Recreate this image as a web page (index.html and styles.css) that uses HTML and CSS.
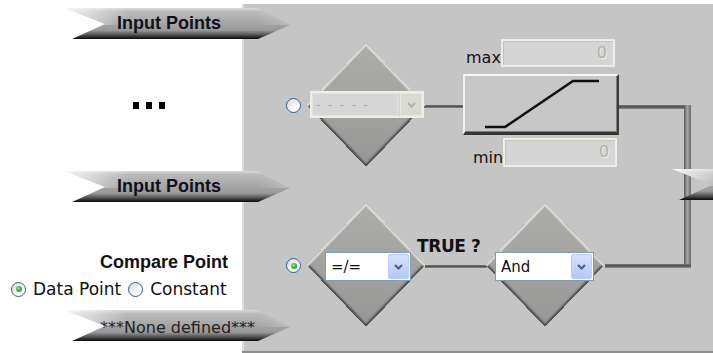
FILE: index.html
```html
<!DOCTYPE html>
<html lang="en">
<head>
  <meta charset="UTF-8" />
  <title>Compare Point – Logic Editor</title>
  <link rel="stylesheet" href="styles.css">
</head>
<body>
  <div class="page">

    <aside class="side">
      <div class="banner banner-title">Input Points</div>
      <div class="ellipsis"><i></i><i></i><i></i></div>
      <div class="banner banner-title banner-second">Input Points</div>

      <div class="compare">
        <div class="compare-title">Compare Point</div>
        <div class="choice">
          <label><span class="radio on"></span>Data Point</label>
          <label><span class="radio"></span>Constant</label>
        </div>
      </div>

      <div class="banner banner-empty">***None defined***</div>
    </aside>

    <main class="canvas">
      <!-- wires go first so nodes sit on top of them -->
      <div class="wire wire-a"></div>
      <div class="wire wire-b"></div>
      <div class="pipe"></div>
      <div class="wire wire-c"></div>
      <div class="wire wire-d"></div>

      <!-- top branch: range check -->
      <span class="radio node-radio1"></span>
      <div class="diamond diamond-1"></div>
      <div class="select disabled select-1">
        <span class="value">- - - - -</span>
        <span class="arrow">
          <svg viewBox="0 0 9 6" width="9" height="6"><path d="M1 1l3.5 3.5L8 1" fill="none" stroke="#b4b4ae" stroke-width="2"/></svg>
        </span>
      </div>

      <div class="field field-max">
        <span class="field-label">max</span>
        <span class="box">0</span>
      </div>
      <button class="ramp" type="button" aria-label="Range">
        <svg viewBox="0 0 152 56" width="152" height="56">
          <polyline points="20,51 40,51 108,5 134,5" fill="none" stroke="#111" stroke-width="2.5"/>
        </svg>
      </button>
      <div class="field field-min">
        <span class="field-label">min</span>
        <span class="box">0</span>
      </div>

      <!-- bottom branch: comparison -->
      <span class="radio on node-radio2"></span>
      <div class="diamond diamond-2"></div>
      <div class="select select-2">
        <span class="value">=/=</span>
        <span class="arrow">
          <svg viewBox="0 0 9 6" width="9" height="6"><path d="M1 1l3.5 3.5L8 1" fill="none" stroke="#4a5d87" stroke-width="2"/></svg>
        </span>
      </div>
      <div class="true-label">TRUE ?</div>
      <div class="diamond diamond-3"></div>
      <div class="select select-3">
        <span class="value">And</span>
        <span class="arrow">
          <svg viewBox="0 0 9 6" width="9" height="6"><path d="M1 1l3.5 3.5L8 1" fill="none" stroke="#4a5d87" stroke-width="2"/></svg>
        </span>
      </div>

      <div class="banner banner-out"></div>
    </main>

  </div>
</body>
</html>
```

FILE: styles.css
```css
body {
  margin: 0;
  background: #fff;
  font-family: 'DejaVu Sans', sans-serif;
  color: #111;
}
.page {
  display: flex;
  width: 713px;
  height: 353px;
  overflow: hidden;
}

/* ---------- left column ---------- */
.side {
  width: 242px;
  flex: none;
  display: flex;
  flex-direction: column;
  position: relative;
  z-index: 2;
}
.banner {
  width: 225px;
  height: 31px;
  flex: none;
  box-sizing: border-box;
  clip-path: polygon(0 0, 192px 0, 225px 17px, 193px 31px, 7px 31px, 40px 16px);
  background:
    linear-gradient(to right, rgba(255,255,255,.8) 0%, rgba(255,255,255,0) 28%, rgba(255,255,255,0) 85%, rgba(255,255,255,.25) 100%) top / 100% 55% no-repeat,
    linear-gradient(to bottom, #dadada 0, #bababa 12%, #a8a8a8 45%, #989898 72%, #505050 87%, #080808 100%);
  white-space: nowrap;
}
.banner-title {
  margin: 8px 0 0 65px;
  padding-left: 52px;
  font-family: 'Liberation Sans', sans-serif;
  font-weight: bold;
  font-size: 18px;
  line-height: 31px;
  color: #10101c;
}
.banner-second {
  margin-top: 62px;
}
.banner-empty {
  margin: 11px 0 0 65px;
  padding: 2px 0 0 35px;
  font-size: 16px;
  line-height: 31px;
  color: #222;
}
.ellipsis {
  display: flex;
  gap: 7px;
  margin-top: 63px;
  padding-left: 133px;
  height: 7px;
}
.ellipsis i {
  width: 6px;
  height: 7px;
  background: #000;
}
.compare {
  margin-top: 50px;
}
.compare-title {
  text-align: right;
  padding-right: 14px;
  font-family: 'Liberation Sans', sans-serif;
  font-weight: bold;
  font-size: 18px;
  line-height: 20px;
}
.choice {
  display: flex;
  align-items: center;
  gap: 7px;
  margin-top: 7px;
  padding-left: 11px;
  font-size: 17px;
  line-height: 20px;
}
.choice label {
  display: flex;
  align-items: center;
  gap: 7px;
}

/* ---------- radios ---------- */
.radio {
  display: inline-block;
  width: 15px;
  height: 15px;
  box-sizing: border-box;
  border-radius: 50%;
  border: 1px solid #2b5f90;
  background: linear-gradient(135deg, #d6d6cf 0%, #fdfdfb 65%);
  position: relative;
  flex: none;
}
.radio.on::after {
  content: '';
  position: absolute;
  left: 3.5px;
  top: 3.5px;
  width: 6px;
  height: 6px;
  border-radius: 50%;
  background: radial-gradient(circle at 40% 40%, #8ae68a, #1c9a1c 75%);
}

/* ---------- diagram canvas ---------- */
.canvas {
  flex: 1;
  margin-top: 4px;
  height: 347px;
  border-bottom: 2px solid #8e8e8e;
  background: #c5c5c5;
  box-shadow: inset 2px 0 0 #dedede;
  position: relative;
  overflow: hidden;
  z-index: 1;
}
.canvas > * {
  position: absolute;
}
.banner-out {
  left: 430px;
  top: 165px;
}

.wire {
  height: 3px;
  background: linear-gradient(to bottom, #7a7a7a, #4c4c4c 45%, #8c8c8c);
}
.wire-a { left: 182px; top: 101px; width: 40px; }
.wire-b { left: 377px; top: 101px; width: 70px; height: 4px; }
.wire-c { left: 363px; top: 260px; width: 86px; height: 4px; }
.wire-d { left: 183px; top: 261px; width: 62px; }
.pipe {
  left: 442px;
  top: 101px;
  width: 7px;
  height: 163px;
  background: linear-gradient(to right, #5c5c5c, #a4a4a4 50%, #6a6a6a);
}

.node-radio1 { left: 44px; top: 94px; }
.node-radio2 { left: 44px; top: 254px; }

.diamond {
  width: 84px;
  height: 84px;
  box-sizing: border-box;
  transform: scaleY(1.04) rotate(45deg);
  background: linear-gradient(to bottom right, #acacaa 0%, #a2a2a0 50%, #979795 100%);
  box-shadow:
    inset 2px 2px 1px #dcdcd2,
    inset -2px -2px 2px #4e4e4e;
}
.diamond-1 { left: 82px; top: 59px; }
.diamond-2 { left: 82px; top: 219px; }
.diamond-3 { left: 261px; top: 219px; }

/* ---------- dropdowns ---------- */
.select {
  display: flex;
  box-sizing: border-box;
  border: 1px solid #7f9db9;
  background: #fff;
  font-size: 15px;
}
.select .value {
  flex: 1;
  display: flex;
  align-items: center;
  padding-left: 5px;
}
.select .arrow {
  width: 19px;
  margin: 1px;
  display: flex;
  align-items: center;
  justify-content: center;
  border: 1px solid #bccdf5;
  border-radius: 2px;
  background: linear-gradient(to bottom, #d6e1fc, #b4c7f5);
}
.select.disabled {
  border: 2px solid #efeee0;
  background: #d6d6d6;
}
.select.disabled .value {
  border: 1px solid #e2e2dc;
  font-size: 13px;
  letter-spacing: 1.5px;
  color: #b0a88e;
  padding-left: 3px;
}
.select.disabled .arrow {
  width: 20px;
  margin: 0 0 0 2px;
  border: 1px solid #e6e6de;
  border-radius: 0;
  background: #dadad4;
}
.select-1 { left: 68px; top: 87px; width: 114px; height: 27px; }
.select-2 { left: 83px; top: 248px; width: 86px; height: 29px; }
.select-3 { left: 253px; top: 248px; width: 99px; height: 29px; }

.true-label {
  left: 175px;
  top: 233px;
  font-weight: bold;
  font-size: 17px;
  letter-spacing: -0.4px;
  line-height: 19px;
}

/* ---------- limiter ---------- */
.ramp {
  left: 221px;
  top: 70px;
  width: 156px;
  height: 61px;
  padding: 0;
  box-sizing: border-box;
  border-style: solid;
  border-width: 2px 2px 3px 2px;
  border-color: #f6f6f6 #3c3c3c #353535 #f0f0f0;
  background: #c7c7c7;
  box-shadow: inset -1px -1px 0 #7c7c7c;
  display: block;
}
.ramp svg {
  display: block;
}
.field {
  display: flex;
  align-items: flex-end;
}
.field-label {
  font-size: 16px;
  line-height: 18px;
}
.box {
  box-sizing: border-box;
  width: 114px;
  height: 28px;
  border: 2px solid #efeee2;
  background: #d5d5d5;
  box-shadow: inset 1px 1px 0 #c4c4bc;
  text-align: right;
  padding-right: 6px;
  font-size: 16px;
  line-height: 24px;
  color: #b2b2aa;
  text-shadow: 1px 1px 0 #ececec;
}
.field-max { left: 224px; top: 35px; }
.field-min { left: 231px; top: 134px; }
.field-min .box { height: 29px; }
```
